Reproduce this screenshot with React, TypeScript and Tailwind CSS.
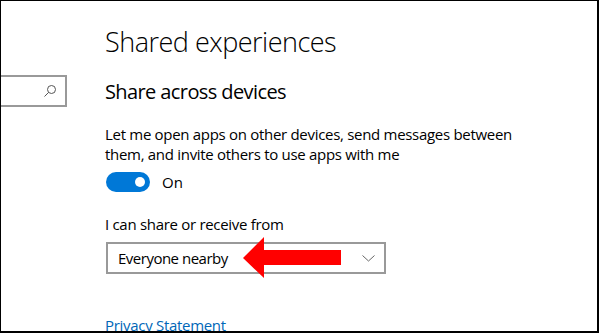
import React from "react";

const font = { fontFamily: '"Segoe UI", "Open Sans", "Noto Sans", sans-serif' };

const SearchGlyph = () => (
  <svg width="14" height="14" viewBox="0 0 14 14" fill="none" stroke="#555" strokeWidth="1">
    <circle cx="8.5" cy="5.5" r="4" />
    <path d="M5.6 8.4 L1.5 12.5" />
  </svg>
);

const Chevron = () => (
  <svg width="13" height="7" viewBox="0 0 13 7" fill="none" stroke="#666" strokeWidth="1">
    <path d="M0.5 0.5 L6.5 6 L12.5 0.5" />
  </svg>
);

const RedArrow = () => (
  <svg width="98" height="41" viewBox="0 0 98 41">
    <polygon points="0,21 21,0 21,13 98,13 98,28 21,28 21,41" fill="#ff0000" />
  </svg>
);

export default function App() {
  return (
    <div
      className="w-[599px] h-[333px] bg-white border-black border-t border-l border-r-2 border-b-2 overflow-hidden flex items-start text-black"
      style={font}
    >
      {/* nav pane with the cut off search box */}
      <div className="w-[104px] shrink-0 pt-[74px]">
        <div className="w-[66px] h-[32px] border-y-2 border-r-2 border-[#999] flex items-center justify-end pr-[8px]">
          <SearchGlyph />
        </div>
      </div>

      <div className="flex flex-col pt-[22px]">
        <h1 className="text-[27px] font-light leading-[38px] tracking-[-0.5px]">Shared experiences</h1>
        <h2 className="text-[20px] leading-[28px] mt-[17px] tracking-[-0.6px]">Share across devices</h2>

        <p className="text-[15px] leading-[20px] mt-[18px] w-[440px] tracking-[-0.3px]">
          Let me open apps on other devices, send messages between them, and invite others to use apps with me
        </p>

        <div className="flex items-center gap-[12px] mt-[8px] ml-[1px]">
          <div className="w-[44px] h-[20px] rounded-full bg-[#0078d7] flex items-center justify-end pr-[5px]">
            <div className="w-[10px] h-[10px] rounded-full bg-white" />
          </div>
          <span className="text-[15px] leading-[20px]">On</span>
        </div>

        <div className="text-[15px] leading-[20px] mt-[22px] tracking-[-0.3px]">I can share or receive from</div>

        <div className="relative shrink-0 mt-[8px] ml-[1px] w-[280px] h-[32px] border-2 border-[#999] flex items-center justify-between pl-[10px] pr-[9px]">
          <span className="text-[15px] leading-[20px] tracking-[-0.5px]">Everyone nearby</span>
          <Chevron />
          <div className="absolute left-[135px] top-[-7px]">
            <RedArrow />
          </div>
        </div>

        <a className="text-[15px] leading-[20px] mt-[41px] text-[#0067b8] tracking-[-0.3px]" href="#">
          Privacy Statement
        </a>
      </div>
    </div>
  );
}
